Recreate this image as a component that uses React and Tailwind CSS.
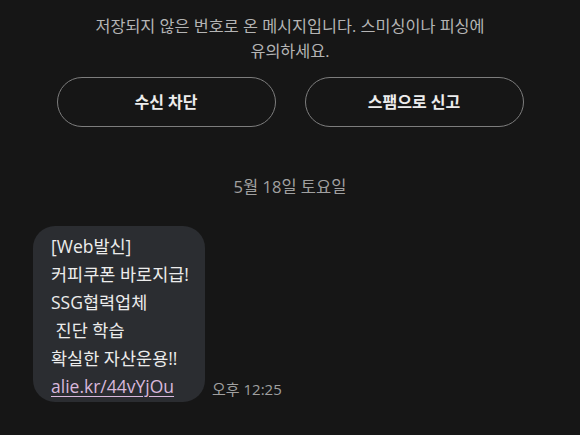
export default function App() {
    const lines = ['[Web발신]', '커피쿠폰 바로지급!', 'SSG협력업체', '\u00a0진단 학습', '확실한 자산운용!!'];
    return (
        <div
            className="w-[580px] h-[435px] overflow-hidden bg-[#161616] text-[#e6e6e6]"
            style={{ fontFamily: '"Open Sans", "Noto Sans CJK KR", sans-serif' }}
        >
            <p className="pt-[14px] px-[60px] text-center text-[16.3px] leading-[25px] text-[#b4b4b4]">
                저장되지 않은 번호로 온 메시지입니다. 스미싱이나 피싱에<br />유의하세요.
            </p>
            <div className="mt-[13px] flex justify-center gap-[29px]">
                <button className="w-[219px] h-[50px] rounded-full border-[1.5px] border-[#7d7d7d] text-[16px] font-bold text-[#ececec]">
                    수신 차단
                </button>
                <button className="w-[219px] h-[50px] rounded-full border-[1.5px] border-[#7d7d7d] text-[16px] font-bold text-[#ececec]">
                    스팸으로 신고
                </button>
            </div>
            <div className="mt-[49px] text-center text-[16.5px] leading-[22px] text-[#a0a0a0]">5월 18일 토요일</div>
            <div className="mt-[28px] flex items-end gap-[7px] pl-[33px]">
                <div className="w-[172px] rounded-[22px] bg-[#2b2d31] pl-[18px] pt-[6px] pb-[2px] text-[17.5px] leading-[28px] text-[#ececec]">
                    {lines.map(l => (
                        <div key={l}>{l}</div>
                    ))}
                    <div className="text-[#d9b8dc] underline underline-offset-[3px]">alie.kr/44vYjOu</div>
                </div>
                <span className="mb-[3px] text-[15px] leading-[20px] text-[#a0a0a0]">오후 12:25</span>
            </div>
        </div>
    );
}
